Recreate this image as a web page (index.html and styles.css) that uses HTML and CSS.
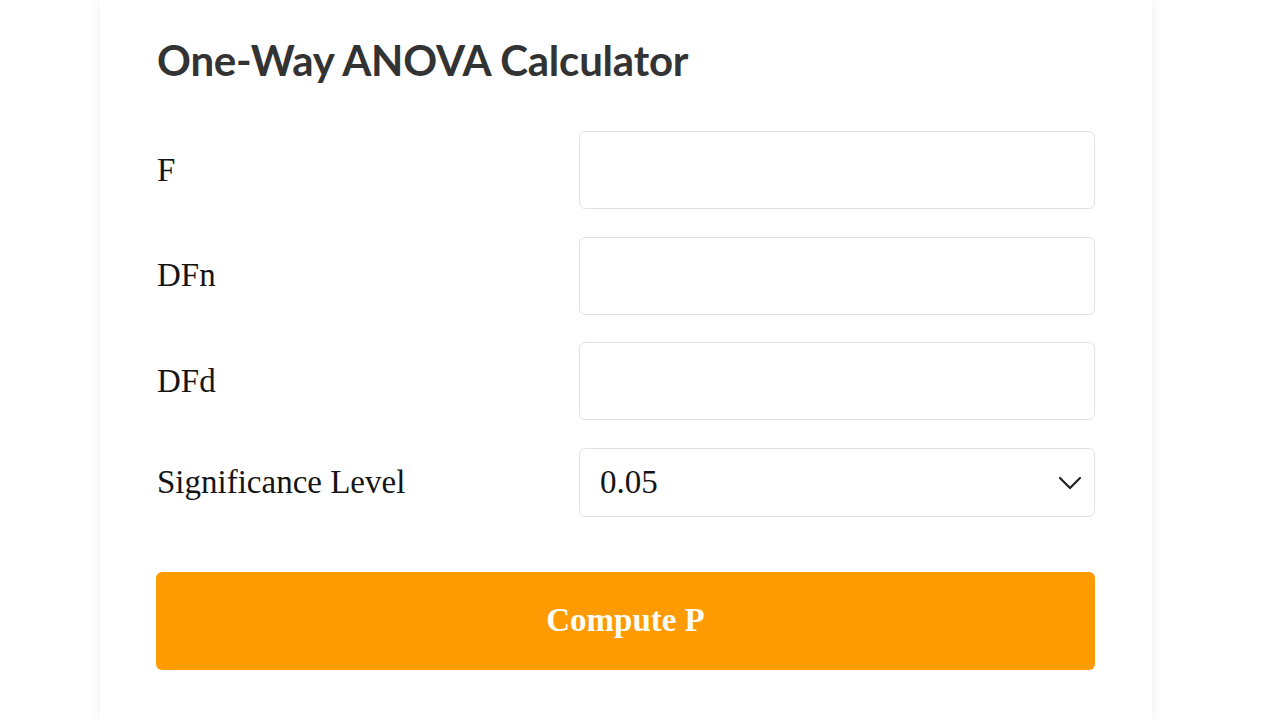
FILE: index.html
```html
<!DOCTYPE html>
<html lang="en">
<head>
<meta charset="utf-8">
<title>One-Way ANOVA Calculator</title>
<link rel="stylesheet" href="styles.css">
</head>
<body>
<main class="card">
  <h1 class="title">One-Way ANOVA Calculator</h1>
  <form class="form">
    <div class="row">
      <label class="label" for="f">F</label>
      <input class="field" id="f" type="text">
    </div>
    <div class="row">
      <label class="label" for="dfn">DFn</label>
      <input class="field" id="dfn" type="text">
    </div>
    <div class="row">
      <label class="label" for="dfd">DFd</label>
      <input class="field" id="dfd" type="text">
    </div>
    <div class="row">
      <label class="label" for="sig">Significance Level</label>
      <div class="select-wrap">
        <select class="field select" id="sig">
          <option>0.05</option>
          <option>0.01</option>
          <option>0.10</option>
        </select>
        <svg class="chevron" width="24" height="14" viewBox="0 0 24 14" aria-hidden="true">
          <path d="M2 2 L12 12 L22 2" fill="none" stroke="#222" stroke-width="2.2" stroke-linecap="round" stroke-linejoin="round"/>
        </svg>
      </div>
    </div>
    <button class="btn" type="button">Compute P</button>
  </form>
</main>
</body>
</html>
```
FILE: styles.css
```css
* { box-sizing: border-box; }

html, body {
  margin: 0;
  background: #ffffff;
  height: 720px;
  overflow: hidden;
}

.card {
  margin-left: 100px;
  width: 1052px;
  min-height: 720px;
  padding: 35px 57px 0 57px;
  background: #fff;
  box-shadow: 0 0 12px rgba(0, 0, 0, 0.07);
}

.title {
  margin: 0 0 46px 0;
  font-family: Lato, "Open Sans", sans-serif;
  font-weight: 700;
  font-size: 42px;
  line-height: 50px;
  color: #333333;
  letter-spacing: -0.2px;
}

.form {
  display: flex;
  flex-direction: column;
  gap: 27.5px;
}

.row {
  display: grid;
  grid-template-columns: 422px 516px;
  align-items: center;
}

.label {
  font-family: "Liberation Serif", "Times New Roman", serif;
  font-size: 33px;
  color: #151515;
}

.field {
  width: 516px;
  height: 78px;
  border: 1.5px solid #e2e2e2;
  border-radius: 6px;
  background: #fff;
  font-family: "Liberation Serif", "Times New Roman", serif;
  font-size: 33px;
  color: #151515;
  padding: 0 20px;
  outline: none;
}

.select-wrap {
  position: relative;
  width: 516px;
}

.select {
  height: 69px;
  appearance: none;
  -webkit-appearance: none;
  display: block;
}

.chevron {
  position: absolute;
  right: 13px;
  top: 28px;
  pointer-events: none;
}

.btn {
  margin-top: 27.5px;
  width: 939px;
  height: 98px;
  border: none;
  border-radius: 6px;
  background: #fe9a02;
  color: #fffdf4;
  font-family: "Liberation Serif", "Times New Roman", serif;
  font-weight: 700;
  font-size: 33px;
  margin-left: -1px;
}
```
